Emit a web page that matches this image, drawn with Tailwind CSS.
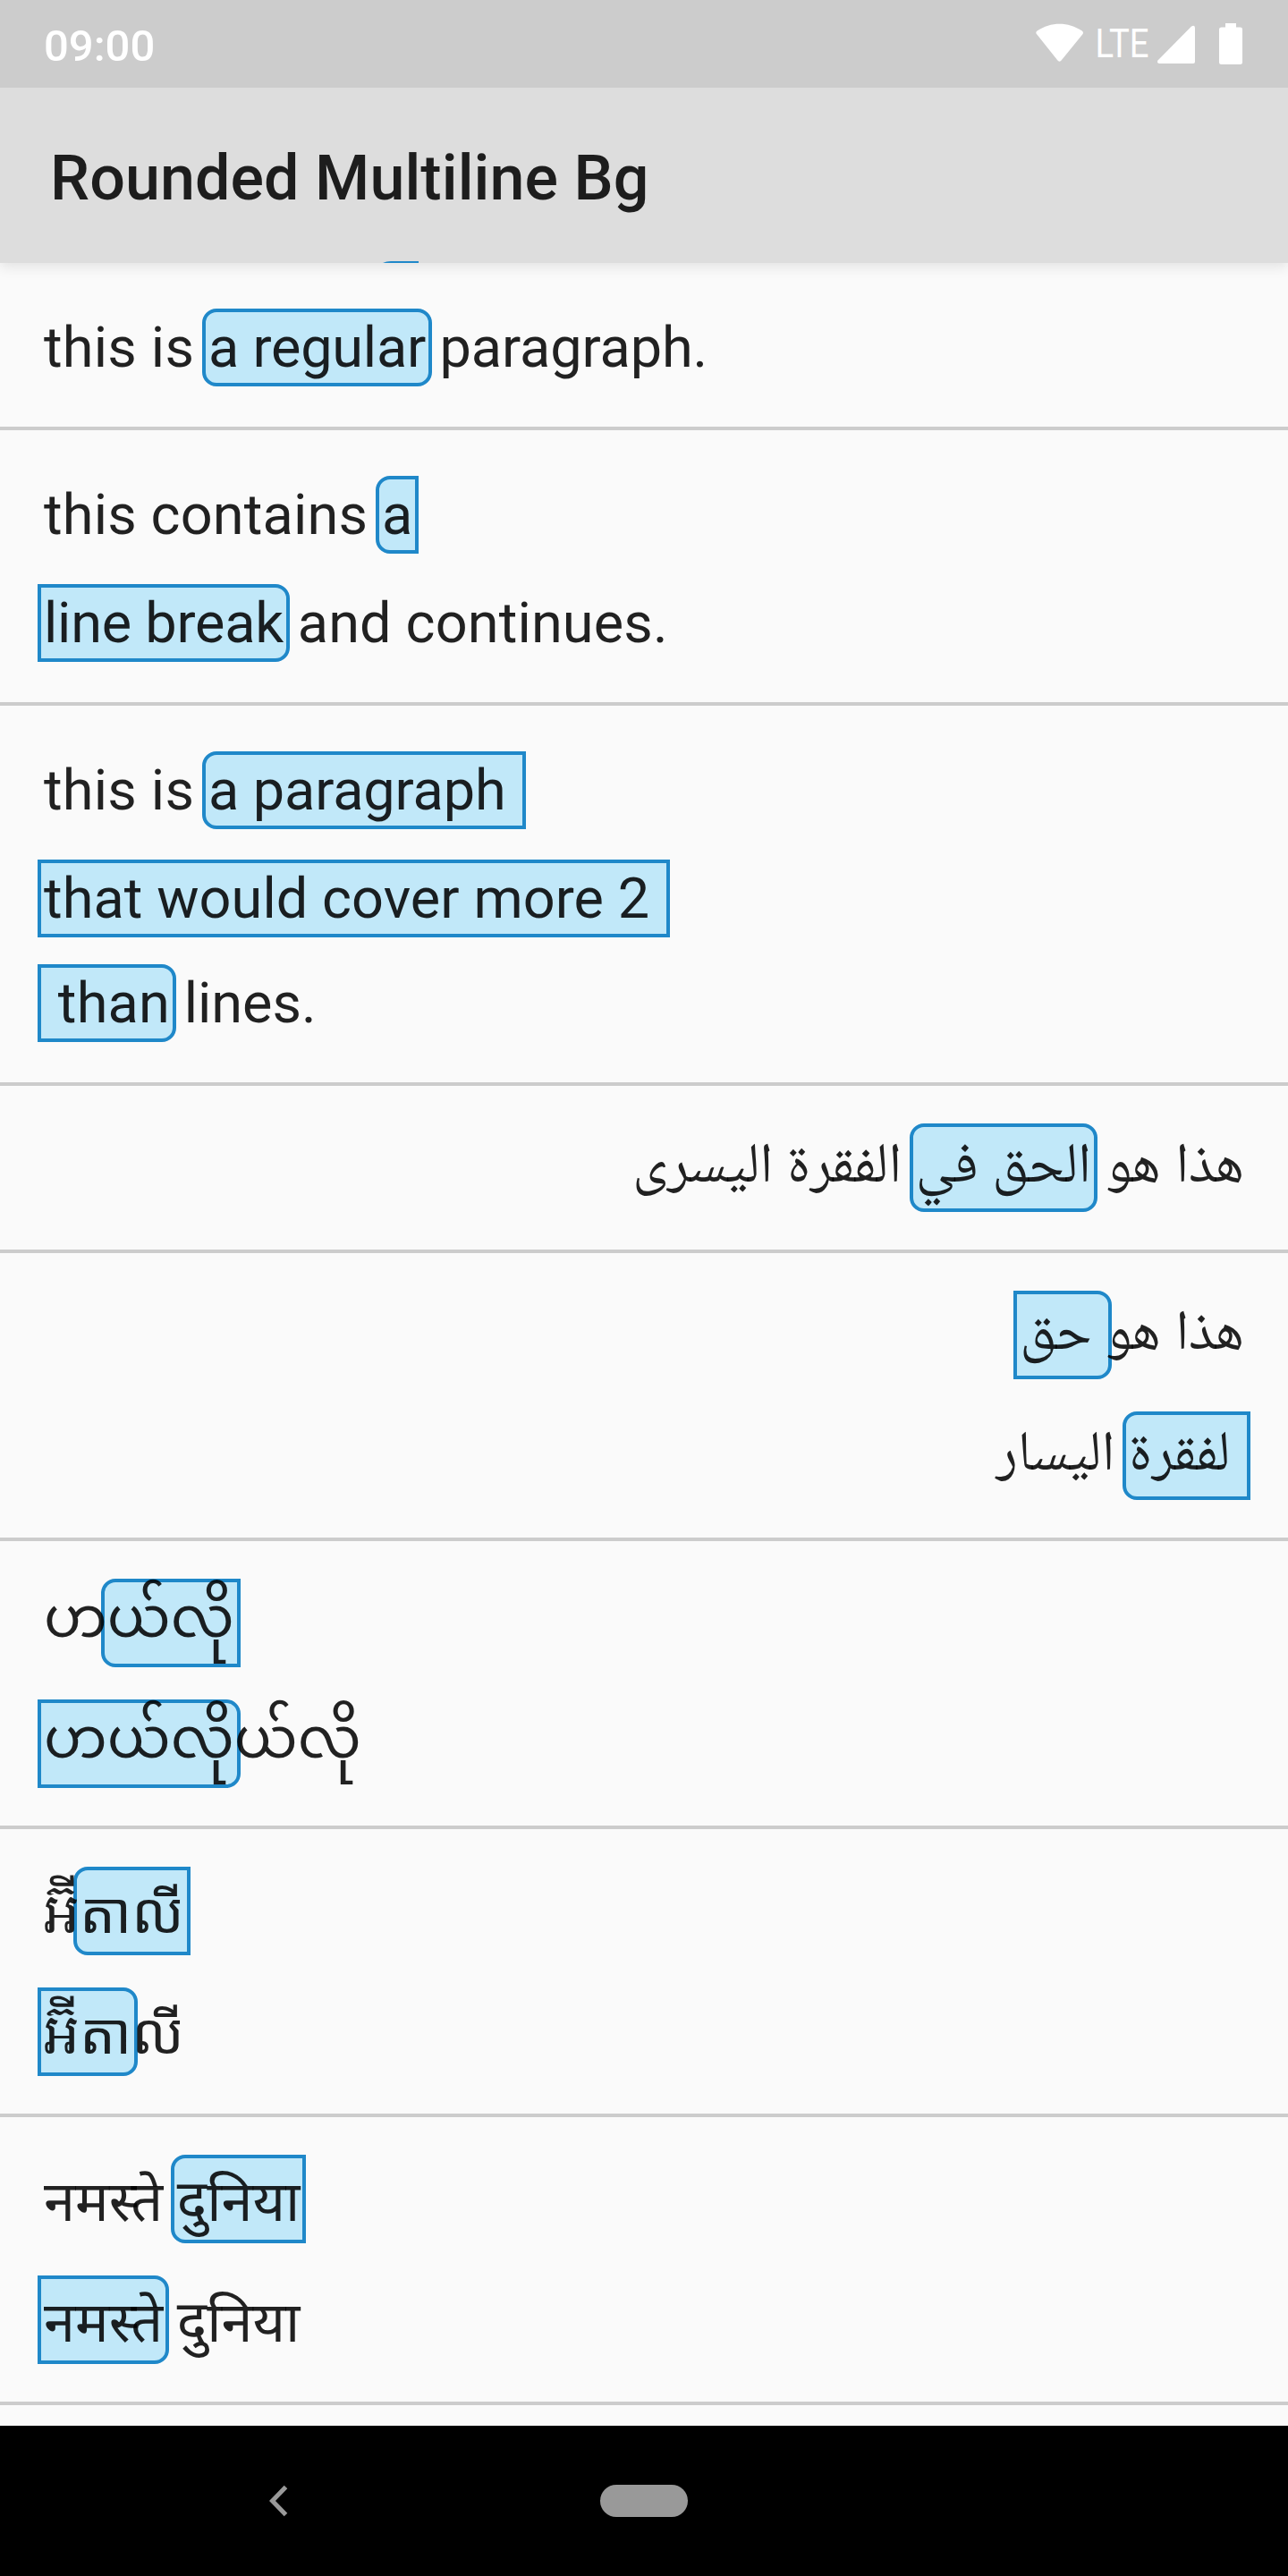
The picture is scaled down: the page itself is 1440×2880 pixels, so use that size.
<!DOCTYPE html>
<html lang="en">
<head>
<meta charset="utf-8">
<title>Rounded Multiline Bg</title>
<script src="https://cdn.jsdelivr.net/npm/@tailwindcss/browser@4"></script>
</head>
<body class="bg-[#fafafa]">
<div class="flex h-[2880px] w-[1440px] flex-col overflow-hidden bg-[#fafafa] font-['Roboto','Noto_Naskh_Arabic','Noto_Sans_Myanmar','Noto_Sans',sans-serif]">

  <!-- Status bar -->
  <header class="relative z-10 flex h-[98px] shrink-0 items-center justify-between bg-[#cccccc] pr-[51px] pl-[49px] text-white">
    <span class="pt-1 text-[49px] leading-none font-medium">09:00</span>
    <svg class="h-[98px] w-[240px]" viewBox="1149 0 240 98" fill="#fff">
      <path d="M1159.300 38.500Q1157.200 36.300 1159.500 34.500C1175 24 1194 24 1209.800 34.500Q1212 36.300 1210.200 38.500L1187 67Q1184.500 70.500 1182 67Z"/>
      <text x="1224.500" y="64" font-size="43.500" textLength="60" lengthAdjust="spacingAndGlyphs" font-family="Roboto, sans-serif">LTE</text>
      <path d="M1332 29.500Q1336 27 1336 32V69Q1336 71 1334 71H1296Q1293 70.500 1294.500 67.500Z"/>
      <path d="M1370 26h12v4.500h4.500a2.500 2.500 0 0 1 2.500 2.500v36.500a2.500 2.500 0 0 1-2.500 2.500h-21a2.500 2.500 0 0 1-2.500-2.500v-36.500a2.500 2.500 0 0 1 2.500-2.500h4.500z"/>
    </svg>
  </header>

  <!-- App bar -->
  <div class="relative flex h-[196px] shrink-0 items-center bg-[#dddddd] px-14 pt-1.5 shadow-[0_4px_14px_rgba(0,0,0,0.10)]">
    <h1 class="text-[70px] leading-none font-medium tracking-[0.08px] text-black/87">Rounded Multiline Bg</h1>
    <!-- Edge of the scrolled highlight above the first row -->
    <svg class="absolute bottom-0 left-[428px] h-[2px] w-10" viewBox="0 0 40 2"><path d="M0 2Q4 0 9 0H40V2Z" fill="#1f88c9"/></svg>
  </div>

  <!-- Samples -->
  <main class="flex grow flex-col overflow-hidden text-[63px] leading-[79px] whitespace-pre text-black/87">
    <section class="flex flex-col border-b-4 border-[#cccccc] px-[49px] pt-[51px] pb-[45px]">
      <p class="flex h-[87px]"><span class="relative pt-1 tracking-[0.22px]">this is </span><mark class="-mx-[7px] rounded-2xl border-4 border-[#1f88c9] bg-[#c1e8f9] px-[3px] tracking-[-0.23px] text-black/87">a regular</mark><span class="relative pt-1 tracking-[-0.1px]"> paragraph.</span></p>
    </section>

    <section class="flex flex-col gap-[34px] border-b-4 border-[#cccccc] px-[49px] pt-[51px] pb-[45px]">
      <p class="flex h-[87px]"><span class="relative pt-1 tracking-[0.17px]">this contains </span><mark class="-mx-[7px] rounded-l-2xl border-4 border-[#1f88c9] bg-[#c1e8f9] px-[3px] text-black/87">a</mark></p>
      <p class="flex h-[87px]"><mark class="-mx-[7px] rounded-r-2xl border-4 border-[#1f88c9] bg-[#c1e8f9] px-[3px] tracking-[-0.22px] text-black/87">line break</mark><span class="relative pt-1 tracking-[0.14px]"> and continues.</span></p>
    </section>

    <section class="flex flex-col border-b-4 border-[#cccccc] px-[49px] pt-[51px] pb-[45px]">
      <p class="mb-[34px] flex h-[87px]"><span class="relative pt-1 tracking-[0.22px]">this is </span><mark class="-mx-[7px] rounded-l-2xl border-4 border-[#1f88c9] bg-[#c1e8f9] px-[3px] tracking-[-0.1px] text-black/87">a paragraph </mark></p>
      <p class="mb-[30px] flex h-[87px]"><mark class="-mx-[7px] border-4 border-[#1f88c9] bg-[#c1e8f9] px-[3px] tracking-[0.07px] text-black/87">that would cover more 2 </mark></p>
      <p class="flex h-[87px]"><mark class="-mx-[7px] rounded-r-2xl border-4 border-[#1f88c9] bg-[#c1e8f9] px-[3px] tracking-[0.2px] text-black/87"> than</mark><span class="relative pt-1"> lines.</span></p>
    </section>

    <section dir="rtl" lang="ar" class="flex flex-col border-b-4 border-[#cccccc] px-[49px] py-[42px]">
      <p class="flex h-[99px]"><span class="relative pt-1 [word-spacing:0.7px]">هذا هو </span><mark class="-mx-[7px] rounded-2xl border-4 border-[#1f88c9] bg-[#c1e8f9] px-[3px] text-black/87">الحق في</mark><span class="relative pt-1"> الفقرة اليسرى</span></p>
    </section>

    <section dir="rtl" lang="ar" class="flex flex-col gap-9 border-b-4 border-[#cccccc] px-[49px] py-[42px]">
      <p class="flex h-[99px]"><span class="relative pt-1 [word-spacing:0.7px]">هذا هو</span><mark class="-mx-[7px] rounded-r-2xl border-4 border-[#1f88c9] bg-[#c1e8f9] px-[3px] text-black/87"> حق</mark></p>
      <p class="flex h-[99px]"><mark class="-mx-[7px] rounded-l-2xl border-4 border-[#1f88c9] bg-[#c1e8f9] px-[3px] text-black/87"> لفقرة</mark><span class="relative pt-1"> اليسار</span></p>
    </section>

    <section lang="my" class="flex flex-col gap-9 border-b-4 border-[#cccccc] px-[49px] py-[42px]">
      <p class="flex h-[99px]"><span class="relative pt-1">ဟ</span><mark class="-mx-[7px] rounded-l-2xl border-4 border-[#1f88c9] bg-[#c1e8f9] px-[3px] text-black/87">ယ်လို</mark></p>
      <p class="flex h-[99px]"><mark class="-mx-[7px] rounded-r-2xl border-4 border-[#1f88c9] bg-[#c1e8f9] px-[3px] text-black/87">ဟယ်လို</mark><span class="relative pt-1">ယ်လို</span></p>
    </section>

    <section lang="km" class="flex flex-col gap-9 border-b-4 border-[#cccccc] px-[49px] py-[42px]">
      <p class="flex h-[99px]"><span class="relative pt-[13px]">អ៊ី</span><mark class="-mx-[7px] rounded-l-2xl border-4 border-[#1f88c9] bg-[#c1e8f9] px-[3px] pt-[9px] font-['Roboto','Noto_Sans_Khmer',sans-serif] text-black/87">តាលី</mark></p>
      <p class="flex h-[99px]"><mark class="-mx-[7px] rounded-r-2xl border-4 border-[#1f88c9] bg-[#c1e8f9] px-[3px] pt-[9px] text-black/87">អ៊ី<span class="font-['Roboto','Noto_Sans_Khmer',sans-serif]">តា</span></mark><span class="relative pt-[13px] font-['Roboto','Noto_Sans_Khmer',sans-serif]">លី</span></p>
    </section>

    <section lang="hi" class="flex flex-col gap-9 border-b-4 border-[#cccccc] px-[49px] py-[42px]">
      <p class="flex h-[99px]"><span class="relative pt-[13px]">नमस्ते </span><mark class="-mx-[7px] rounded-l-2xl border-4 border-[#1f88c9] bg-[#c1e8f9] px-[3px] pt-[9px] text-black/87">दुनिया</mark></p>
      <p class="flex h-[99px]"><mark class="-mx-[7px] rounded-r-2xl border-4 border-[#1f88c9] bg-[#c1e8f9] px-[3px] pt-[9px] text-black/87">नमस्ते</mark><span class="relative pt-[13px]"> दुनिया</span></p>
    </section>
  </main>

  <!-- Navigation bar -->
  <nav class="grid h-[168px] shrink-0 grid-cols-[671px_98px] items-center bg-black">
    <svg class="ml-[300px] h-9 w-6" viewBox="0 0 24 36" fill="none" stroke="#999" stroke-width="5"><path d="M19.500 2.500L4.500 18L19.500 33.500"/></svg>
    <span class="h-9 rounded-full bg-[#999999]"></span>
  </nav>
</div>
</body>
</html>
